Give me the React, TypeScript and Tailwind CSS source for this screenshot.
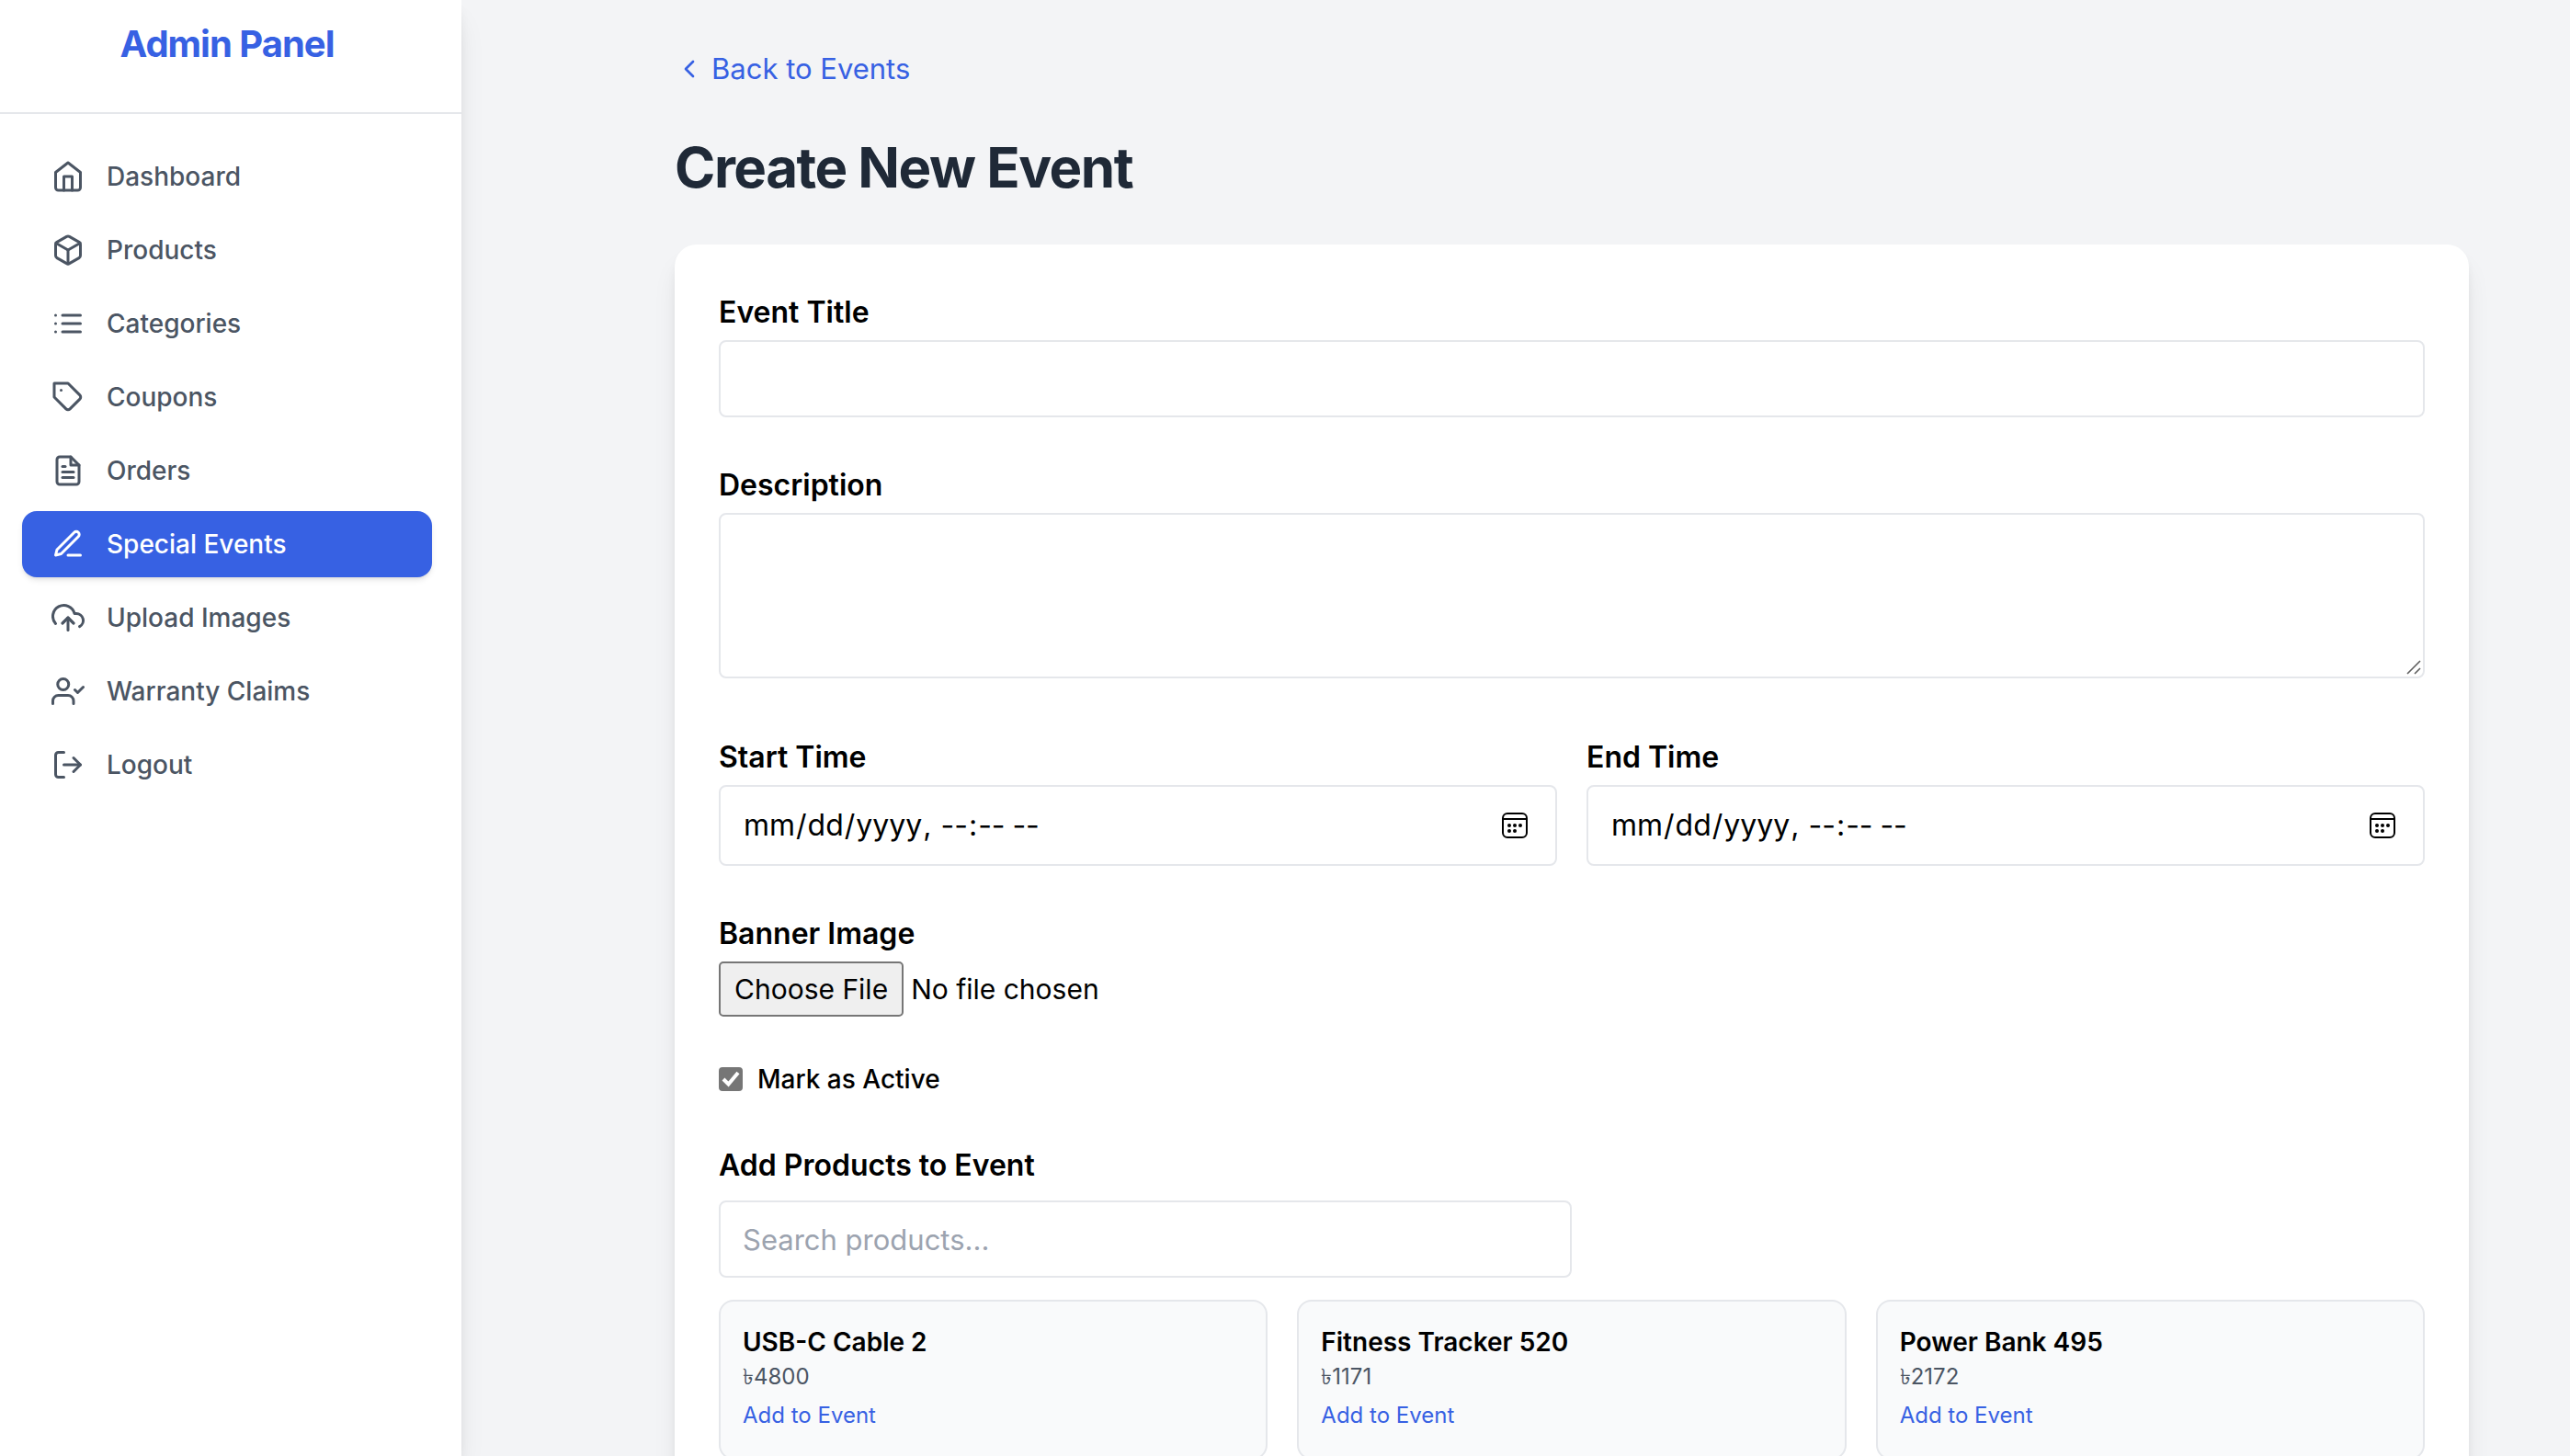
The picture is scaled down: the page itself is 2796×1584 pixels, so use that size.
import type { ReactNode } from "react";
import type { IconType } from "react-icons";
import {
  FiBox,
  FiChevronLeft,
  FiEdit3,
  FiFileText,
  FiHome,
  FiList,
  FiLogOut,
  FiTag,
  FiUploadCloud,
  FiUserCheck,
} from "react-icons/fi";

const NAV: { label: string; icon: IconType; active?: boolean }[] = [
  { label: "Dashboard", icon: FiHome },
  { label: "Products", icon: FiBox },
  { label: "Categories", icon: FiList },
  { label: "Coupons", icon: FiTag },
  { label: "Orders", icon: FiFileText },
  { label: "Special Events", icon: FiEdit3, active: true },
  { label: "Upload Images", icon: FiUploadCloud },
  { label: "Warranty Claims", icon: FiUserCheck },
];

const PRODUCTS = [
  { name: "USB-C Cable 2", price: 4800 },
  { name: "Fitness Tracker 520", price: 1171 },
  { name: "Power Bank 495", price: 2172 },
];

const navItem = "flex h-[72px] w-full items-center gap-6 rounded-2xl px-8 text-[28px] font-medium";
const field = "block w-full rounded-lg border-2 border-[#e5e7eb] bg-white px-6 text-[32px] leading-[48px]";
const raised = "shadow-[0_20px_30px_-6px_rgba(0,0,0,0.1),0_8px_12px_-4px_rgba(0,0,0,0.1)]";

function Sidebar() {
  return (
    <aside className={`w-[502px] shrink-0 bg-white ${raised}`}>
      <div className="flex h-[124px] justify-center border-b-2 border-[#e5e7eb] pr-2 pt-5">
        <h2 className="text-[40px] leading-[56px] font-bold tracking-tight text-[#3761e3]">Admin Panel</h2>
      </div>
      <nav className="flex flex-col gap-2 pt-8 pr-8 pl-6" aria-label="Admin">
        {NAV.map(({ label, icon: Icon, active }) => (
          <a
            key={label}
            href="#"
            className={`${navItem} ${active ? "bg-[#3761e3] text-white shadow-md" : "text-[#4b5563]"}`}
          >
            <Icon className="size-9" />
            {label}
          </a>
        ))}
        <button type="button" className={`${navItem} text-[#4b5563]`}>
          <FiLogOut className="size-9" />
          Logout
        </button>
      </nav>
    </aside>
  );
}

function Label({ htmlFor, children }: { htmlFor: string; children: ReactNode }) {
  return (
    <label htmlFor={htmlFor} className="mb-1 block text-[32px] leading-[52px] font-semibold">
      {children}
    </label>
  );
}

function CalendarIcon() {
  return (
    <svg viewBox="0 0 28 28" className="size-7" fill="none" stroke="currentColor" strokeWidth="2" aria-hidden="true">
      <rect x="1" y="1" width="26" height="26" rx="5" />
      <path d="M1 7h26" />
      <g fill="currentColor" stroke="none">
        <circle cx="8" cy="14" r="2" />
        <circle cx="14" cy="14" r="2" />
        <circle cx="20" cy="14" r="2" />
        <circle cx="8" cy="20" r="2" />
        <circle cx="14" cy="20" r="2" />
      </g>
    </svg>
  );
}

function DateField({ id, label }: { id: string; label: string }) {
  return (
    <div>
      <Label htmlFor={id}>{label}</Label>
      <div className="flex h-[88px] items-center rounded-lg border-2 border-[#e5e7eb] pr-[30px] pl-6">
        <input
          id={id}
          type="datetime-local"
          className="min-w-0 flex-1 text-[32px] leading-[48px] [&::-webkit-calendar-picker-indicator]:hidden"
        />
        <button type="button" aria-label={`Pick ${label.toLowerCase()}`}>
          <CalendarIcon />
        </button>
      </div>
    </div>
  );
}

export default function App() {
  return (
    <div className="flex h-screen overflow-hidden bg-[#f3f4f6] font-['Inter',sans-serif] text-black">
      <Sidebar />
      <main className="min-w-0 flex-1 pt-[50px] pr-[110px] pl-[232px]">
        <a href="#" className="inline-flex items-center gap-2 text-[31px] leading-[50px] text-[#3761e3]">
          <FiChevronLeft className="size-8" />
          Back to Events
        </a>
        <h1 className="mt-[46px] text-[60px] leading-[72px] font-bold tracking-tight text-[#1f2937]">
          Create New Event
        </h1>
        <form className={`mt-12 rounded-3xl bg-white p-12 ${raised}`}>
          <Label htmlFor="title">Event Title</Label>
          <input id="title" type="text" className={`${field} h-[84px]`} />

          <div className="mt-12">
            <Label htmlFor="description">Description</Label>
            <div className="relative">
              <textarea id="description" className={`${field} h-[180px] resize-none`} />
              <svg
                viewBox="0 0 16 16"
                className="pointer-events-none absolute right-1 bottom-1 size-4"
                stroke="#5f5f5f"
                strokeWidth="1.6"
                aria-hidden="true"
              >
                <path d="M1 15L15 1M9 15l6-6" />
              </svg>
            </div>
          </div>

          <div className="mt-[60px] grid grid-cols-2 gap-8">
            <DateField id="start" label="Start Time" />
            <DateField id="end" label="End Time" />
          </div>

          <div className="mt-12">
            <Label htmlFor="banner">Banner Image</Label>
            <input
              id="banner"
              type="file"
              className="block h-[60px] w-full text-[30px] leading-[48px] file:mr-2 file:h-[60px] file:rounded-[5px] file:border-2 file:border-[#767676] file:bg-[#efefef] file:px-[15px] file:font-normal"
            />
          </div>

          <label className="mt-12 flex h-10 items-center gap-4 text-[28px] leading-10 font-medium">
            <span className="relative size-[26px]">
              <input
                type="checkbox"
                defaultChecked
                className="peer block size-[26px] appearance-none rounded-[4px] border-2 border-[#767676] checked:bg-[#767676]"
              />
              <svg
                viewBox="0 0 26 26"
                className="pointer-events-none absolute inset-0 hidden size-[26px] peer-checked:block"
                aria-hidden="true"
              >
                <path d="M5 13l5.5 5.5L21 6" fill="none" stroke="white" strokeWidth="4" />
              </svg>
            </span>
            Mark as Active
          </label>

          <h2 className="mt-12 text-[32px] leading-[52px] font-semibold">Add Products to Event</h2>
          <input
            type="text"
            aria-label="Search products"
            placeholder="Search products..."
            className="mt-3 block h-[84px] w-1/2 rounded-lg border-2 border-[#e5e7eb] px-6 text-[31px] placeholder:text-[#9ca3af]"
          />
          <div className="mt-6 grid grid-cols-3 gap-8">
            {PRODUCTS.map((p) => (
              <div key={p.name} className="rounded-2xl border-2 border-[#e5e7eb] bg-[#f9fafb] p-6 pb-[30px]">
                <p className="text-[28px] leading-10 font-semibold">{p.name}</p>
                <p className="text-[24px] leading-9 text-[#4b5563]">৳{p.price}</p>
                <button type="button" className="mt-2 block text-[24px] leading-8 text-[#3761e3]">
                  Add to Event
                </button>
              </div>
            ))}
          </div>
        </form>
      </main>
    </div>
  );
}
